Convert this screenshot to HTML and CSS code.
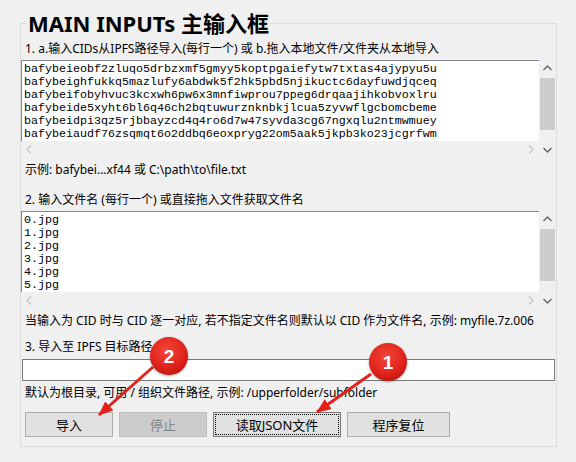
FILE: index.html
```html
<!DOCTYPE html>
<html lang="zh-CN">
<head>
    <meta charset="UTF-8">
    <title>MAIN INPUTs 主输入框</title>
    <link rel="stylesheet" href="styles.css">
</head>
<body>
    <div class="window">
        <fieldset class="group">
            <legend class="group-title">MAIN INPUTs 主输入框</legend>

            <div class="field-label first">1. a.输入CIDs从IPFS路径导入(每行一个) 或 b.拖入本地文件/文件夹从本地导入</div>
            <div class="textbox">
                <div class="textbox-main">
                    <pre class="textbox-text">bafybeieobf2zluqo5drbzxmf5gmyy5koptpgaiefytw7txtas4ajypyu5u
bafybeighfukkq5mazlufy6abdwk5f2hk5pbd5njikuctc6dayfuwdjqceq
bafybeifobyhvuc3kcxwh6pw6x3mnfiwprou7ppeg6drqaajihkobvoxlru
bafybeide5xyht6bl6q46ch2bqtuwurznknbkjlcua5zyvwflgcbomcbeme
bafybeidpi3qz5rjbbayzcd4q4ro6d7w47syvda3cg67ngxqlu2ntmwmuey
bafybeiaudf76zsqmqt6o2ddbq6eoxpryg22om5aak5jkpb3ko23jcgrfwm</pre>
                    <div class="hscroll">
                        <svg class="arrow" width="17" height="17" viewBox="0 0 17 17"><path d="M10 4.5 L6 8.5 L10 12.5" /></svg>
                        <svg class="arrow" width="17" height="17" viewBox="0 0 17 17"><path d="M7 4.5 L11 8.5 L7 12.5" /></svg>
                    </div>
                </div>
                <div class="vscroll">
                    <svg class="arrow dark" width="17" height="17" viewBox="0 0 17 17"><path d="M4.5 10 L8.5 6 L12.5 10" /></svg>
                    <div class="thumb"></div>
                    <svg class="arrow dark" width="17" height="17" viewBox="0 0 17 17"><path d="M4.5 7 L8.5 11 L12.5 7" /></svg>
                </div>
            </div>
            <div class="field-label hint">示例: bafybei...xf44 或 C:\path\to\file.txt</div>

            <div class="field-label second">2. 输入文件名 (每行一个) 或直接拖入文件获取文件名</div>
            <div class="textbox">
                <div class="textbox-main">
                    <pre class="textbox-text">0.jpg
1.jpg
2.jpg
3.jpg
4.jpg
5.jpg</pre>
                    <div class="hscroll">
                        <svg class="arrow" width="17" height="17" viewBox="0 0 17 17"><path d="M10 4.5 L6 8.5 L10 12.5" /></svg>
                        <svg class="arrow" width="17" height="17" viewBox="0 0 17 17"><path d="M7 4.5 L11 8.5 L7 12.5" /></svg>
                    </div>
                </div>
                <div class="vscroll">
                    <svg class="arrow dark" width="17" height="17" viewBox="0 0 17 17"><path d="M4.5 10 L8.5 6 L12.5 10" /></svg>
                    <div class="thumb"></div>
                    <svg class="arrow dark" width="17" height="17" viewBox="0 0 17 17"><path d="M4.5 7 L8.5 11 L12.5 7" /></svg>
                </div>
            </div>
            <div class="field-label note">当输入为 CID 时与 CID 逐一对应, 若不指定文件名则默认以 CID 作为文件名, 示例: myfile.7z.006</div>

            <div class="field-label third">3. 导入至 IPFS 目标路径</div>
            <div class="path-input"></div>
            <div class="field-label hint">默认为根目录, 可用 / 组织文件路径, 示例: /upperfolder/subfolder</div>

            <div class="buttons">
                <button type="button" class="btn btn-import">导入</button>
                <button type="button" class="btn btn-stop" disabled>停止</button>
                <button type="button" class="btn btn-json focused">读取JSON文件</button>
                <button type="button" class="btn btn-reset">程序复位</button>
            </div>
        </fieldset>

        <svg class="callouts" width="576" height="462" viewBox="0 0 576 462">
            <defs>
                <radialGradient id="badgeFill" cx="45%" cy="35%" r="65%">
                    <stop offset="0%" stop-color="#f2463a" />
                    <stop offset="70%" stop-color="#e0241b" />
                    <stop offset="100%" stop-color="#c5150f" />
                </radialGradient>
                <marker id="head" markerWidth="5" markerHeight="4" refX="4.6" refY="2" orient="auto">
                    <path d="M0 0 L5 2 L0 4 Z" fill="#e3221b" />
                </marker>
            </defs>
            <line x1="153" y1="367" x2="99" y2="415" class="callout-line" marker-end="url(#head)" />
            <line x1="371" y1="374" x2="317" y2="412" class="callout-line" marker-end="url(#head)" />
            <circle cx="169" cy="356" r="19" class="badge" />
            <text x="169" y="363" class="badge-num">2</text>
            <circle cx="388" cy="362" r="19" class="badge" />
            <text x="388" y="369" class="badge-num">1</text>
        </svg>
    </div>
</body>
</html>
```

FILE: styles.css
```css
body {
    margin: 0;
    background-color: #f0f0f0;
    font-family: "Noto Sans", "Noto Sans CJK SC", sans-serif;
    font-size: 12px;
    color: #000;
}

.window {
    position: relative;
    width: 576px;
    height: 462px;
    padding-left: 20px;
    box-sizing: border-box;
    overflow: hidden;
}

.group {
    width: 537px;
    margin: 9px 0 0;
    padding: 0 0 9px;
    border: 1px solid #dcdcdc;
    box-sizing: border-box;
    min-width: 0;
}

.group-title {
    margin-left: 6px;
    padding: 0 1px;
    font-size: 22px;
    font-weight: bold;
    line-height: 28px;
}

.field-label {
    padding-left: 4px;
    line-height: 16px;
    white-space: nowrap;
}

.field-label.first {
    margin-top: 4px;
}

.field-label.hint {
    margin-top: 4px;
}

.field-label.second {
    margin-top: 14px;
}

.field-label.note {
    margin-top: 4px;
}

.field-label.third {
    margin-top: 10px;
}

/* multi-line text boxes with scrollbars */
.textbox {
    display: flex;
    height: 98px;
    margin-top: 3px;
}

.textbox-main {
    flex: 1;
    display: flex;
    flex-direction: column;
    min-width: 0;
}

.textbox-text {
    flex: 1;
    margin: 0;
    padding: 2px 0 0 2px;
    background: #fff;
    border-top: 1px solid #828790;
    border-left: 1px solid #828790;
    font-family: "Liberation Mono", monospace;
    font-size: 11.67px;
    line-height: 13px;
    white-space: pre;
    overflow: hidden;
}

.hscroll {
    height: 17px;
    display: flex;
    justify-content: space-between;
}

.vscroll {
    width: 17px;
    display: flex;
    flex-direction: column;
    justify-content: space-between;
}

.thumb {
    height: 52px;
    margin: 1px 1px 0 1px;
    background: #cdcdcd;
    flex: none;
}

.vscroll .thumb {
    margin-bottom: auto;
}

.arrow {
    display: block;
    flex: none;
}

.arrow path {
    fill: none;
    stroke: #c4c4c4;
    stroke-width: 1.3;
}

.arrow.dark path {
    stroke: #606060;
}

.path-input {
    height: 22px;
    width: 533px;
    margin: 4px 0 0 1px;
    border: 1px solid #7a7a7a;
    background: #fff;
    box-sizing: border-box;
}

.buttons {
    display: flex;
    gap: 6px;
    margin-top: 11px;
    padding-left: 4px;
}

.btn {
    height: 25px;
    padding: 0;
    border: 1px solid #adadad;
    background-color: #e1e1e1;
    font-family: "Noto Sans", "Noto Sans CJK SC", sans-serif;
    font-size: 13px;
    color: #000;
}

.btn-import {
    width: 88px;
}

.btn-stop {
    width: 88px;
}

.btn-json {
    width: 128px;
}

.btn-reset {
    width: 103px;
}

.btn:disabled {
    background-color: #cccccc;
    border-color: #bfbfbf;
    color: #838383;
}

.btn.focused {
    border-color: #7a7a7a;
    outline: 1px dotted #000;
    outline-offset: -3px;
}

/* annotation overlay */
.callouts {
    position: absolute;
    top: 0;
    left: 0;
    pointer-events: none;
}

.callout-line {
    stroke: #e3221b;
    stroke-width: 3;
}

.badge {
    fill: url(#badgeFill);
    filter: drop-shadow(0 1px 1px rgba(0, 0, 0, 0.35));
}

.badge-num {
    fill: #fff;
    font-family: "Liberation Sans", sans-serif;
    font-size: 19px;
    font-weight: bold;
    text-anchor: middle;
}
```
